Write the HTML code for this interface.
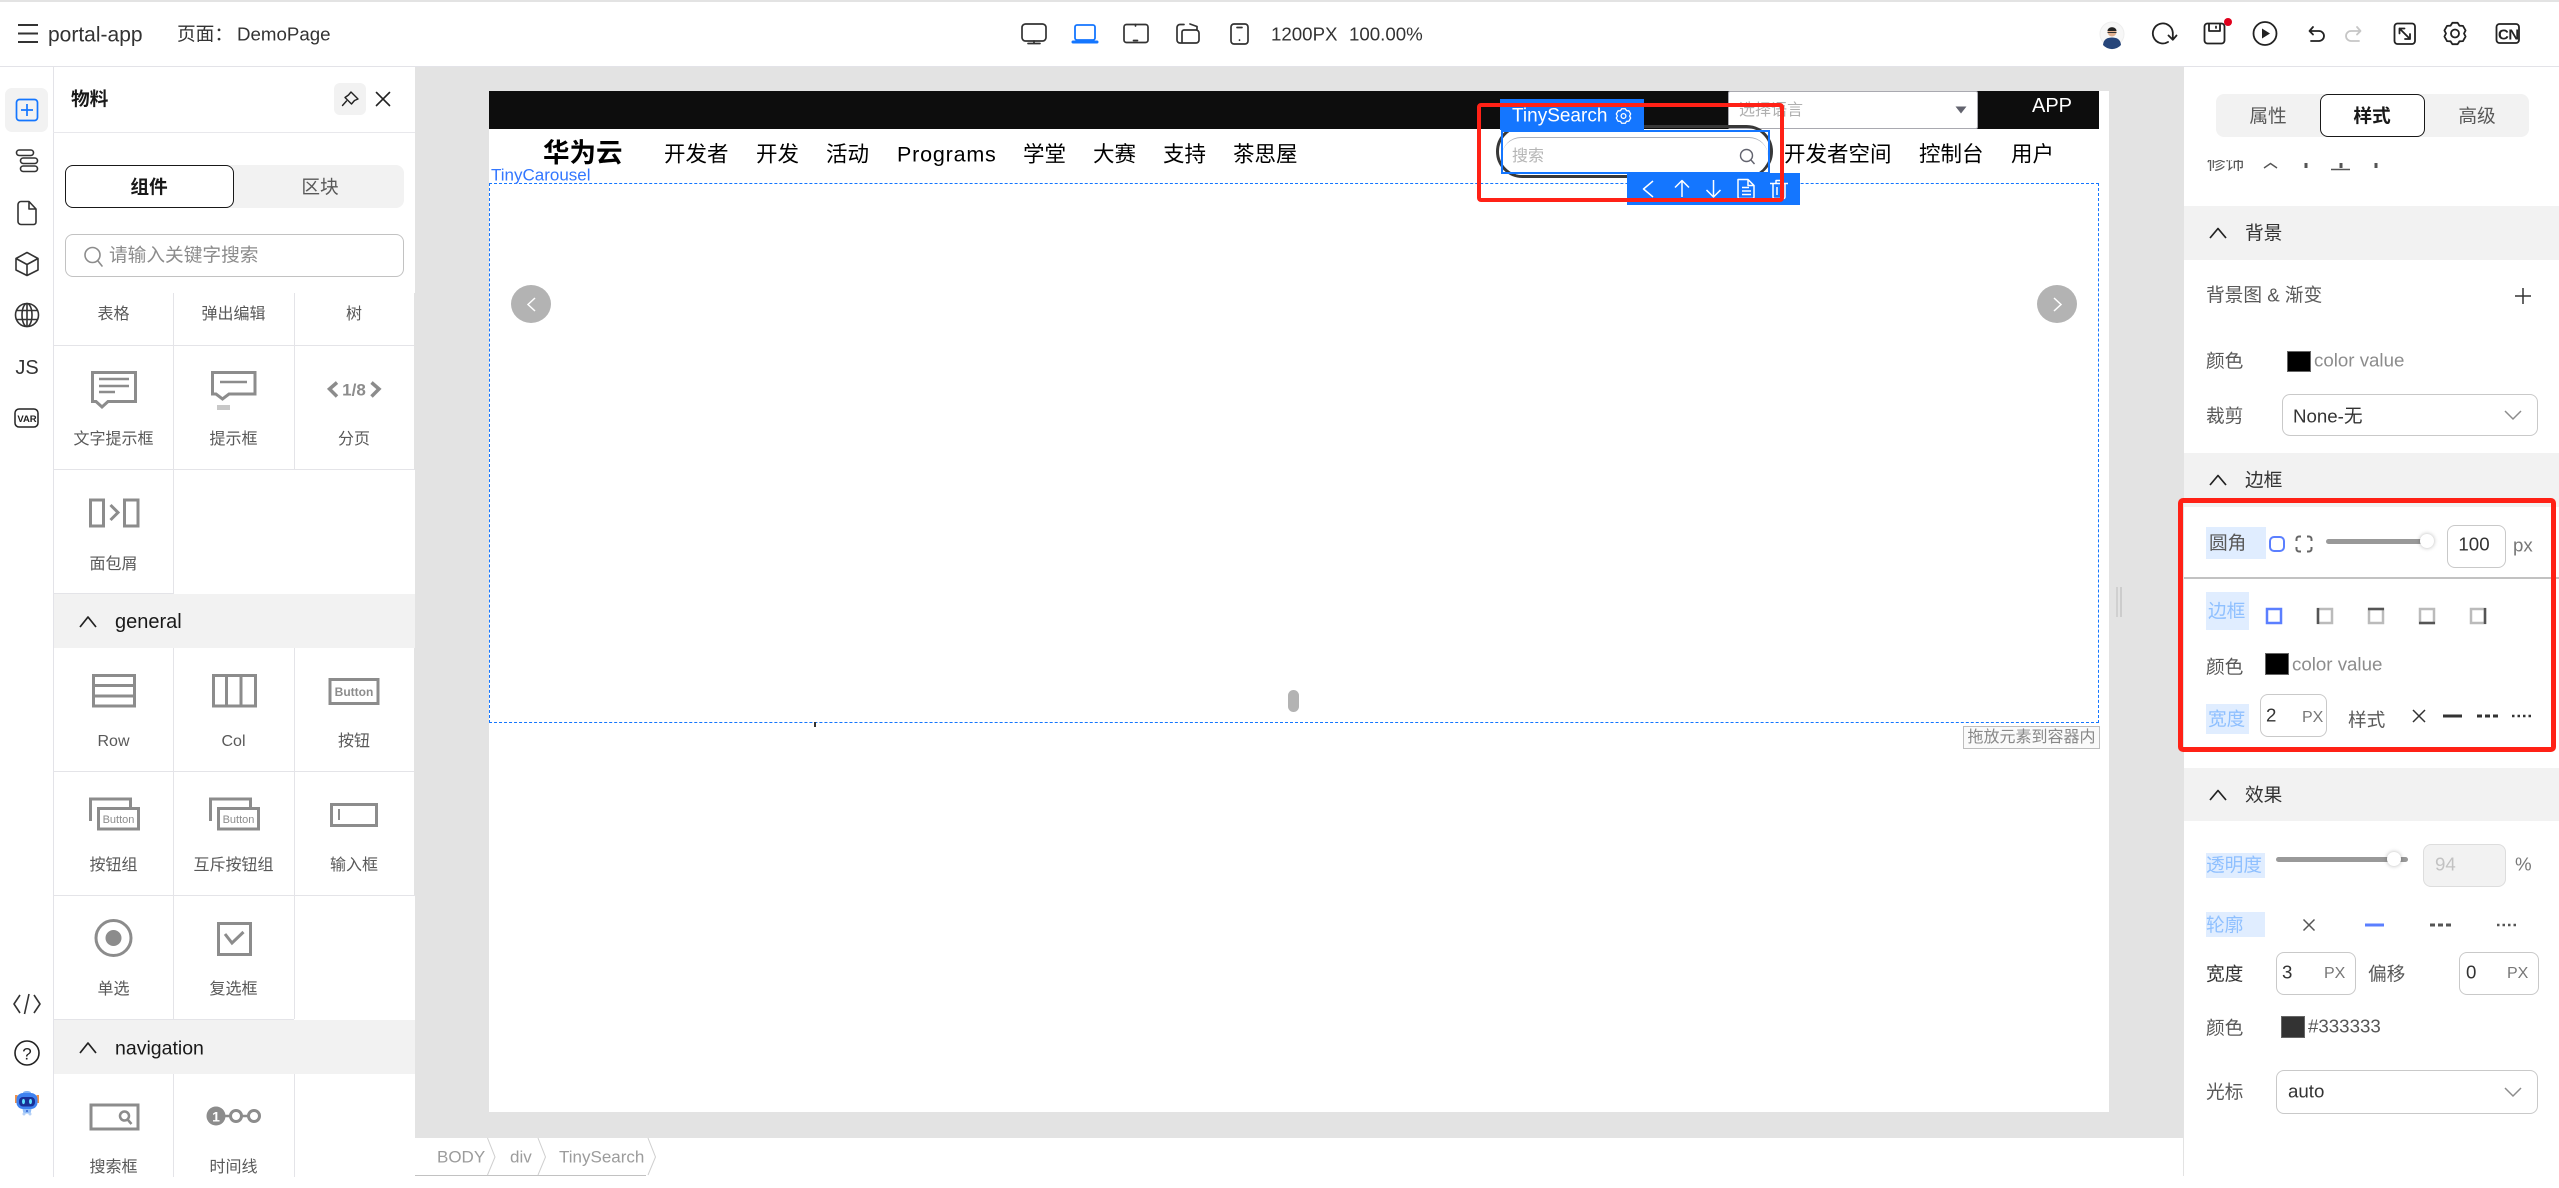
<!DOCTYPE html>
<html lang="zh"><head><meta charset="utf-8"><title>portal-app</title>
<style>
html,body{margin:0;padding:0;background:#fff}
#p{position:relative;width:2559px;height:1188px;overflow:hidden;background:#fff;font-family:"Liberation Sans","Noto Sans CJK SC",sans-serif;color:#333;font-size:18.7px}
.b{position:absolute;box-sizing:border-box}
.t{position:absolute;white-space:nowrap;line-height:1;transform:translateY(calc(-50% + 1px))}
.c{transform:translate(-50%,calc(-50% + 1px))}
.g{font-size:16px;color:#595959;margin-top:1px}
.l{color:#595959}
.hi{color:#8fc0ff}
.nav{font-size:21.5px;color:#000}
.inp{background:#fff;border:1px solid #c9c9c9;border-radius:8px}
.hd{background:#f2f2f2;left:2184px;width:375px}
svg{position:absolute;left:0;top:0}
</style></head><body><div id="p">
<!-- frame -->
<div class="b" style="left:0;top:0;width:2559px;height:2px;background:#e3e3e3"></div>
<div class="b" style="left:0;top:66px;width:2559px;height:1px;background:#e3e3e8"></div>
<div class="b" style="left:415px;top:67px;width:1769px;height:1071px;background:#e3e3e3"></div>
<div class="b" style="left:53px;top:67px;width:1px;height:1110px;background:#e3e3e8"></div>
<div class="b" style="left:5px;top:88px;width:43px;height:44px;background:#f2f2f2;border-radius:7px"></div>
<div class="b" style="left:2183px;top:1138px;width:1px;height:38px;background:#e3e3e3"></div>
<div class="b" style="left:2116px;top:587px;width:2px;height:30px;background:#d0d0d0"></div>
<div class="b" style="left:2120px;top:587px;width:2px;height:30px;background:#cccccc"></div>

<!-- left panel -->
<div class="b" style="left:53px;top:132px;width:362px;height:1px;background:#e8e8ec"></div>
<div class="b" style="left:334px;top:83px;width:32px;height:32px;background:#f2f2f2;border-radius:6px"></div>
<div class="b" style="left:65px;top:165px;width:339px;height:43px;background:#f2f2f2;border-radius:8px"></div>
<div class="b" style="left:65px;top:165px;width:169px;height:43px;background:#fff;border:1px solid #191919;border-radius:8px"></div>
<div class="b" style="left:65px;top:234px;width:339px;height:43px;background:#fff;border:1px solid #c2c2c2;border-radius:8px"></div>

<!-- grid lines -->
<div class="b" style="left:173px;top:293px;width:1px;height:301px;background:#e4e4e8"></div>
<div class="b" style="left:294px;top:293px;width:1px;height:176px;background:#e4e4e8"></div>
<div class="b" style="left:53px;top:345px;width:361px;height:1px;background:#e4e4e8"></div>
<div class="b" style="left:53px;top:469px;width:362px;height:1px;background:#e4e4e8"></div>
<div class="b" style="left:53px;top:593px;width:120px;height:1px;background:#e4e4e8"></div>
<div class="b" style="left:54px;top:594px;width:361px;height:54px;background:#f2f2f2"></div>
<div class="b" style="left:173px;top:648px;width:1px;height:371px;background:#e4e4e8"></div>
<div class="b" style="left:294px;top:648px;width:1px;height:371px;background:#e4e4e8"></div>
<div class="b" style="left:53px;top:771px;width:361px;height:1px;background:#e4e4e8"></div>
<div class="b" style="left:53px;top:895px;width:362px;height:1px;background:#e4e4e8"></div>
<div class="b" style="left:53px;top:1019px;width:241px;height:1px;background:#e4e4e8"></div>
<div class="b" style="left:54px;top:1020px;width:361px;height:54px;background:#f2f2f2"></div>
<div class="b" style="left:173px;top:1074px;width:1px;height:103px;background:#e4e4e8"></div>
<div class="b" style="left:294px;top:1074px;width:1px;height:103px;background:#e4e4e8"></div>
<div class="b" style="left:414px;top:293px;width:1px;height:176px;background:#e3e3e3"></div>
<div class="b" style="left:414px;top:648px;width:1px;height:247px;background:#e3e3e3"></div>

<!-- canvas -->
<div class="b" style="left:489px;top:91px;width:1620px;height:1021px;background:#fff"></div>
<div class="b" style="left:489px;top:91px;width:1610px;height:38px;background:#0d0d0d"></div>
<div class="b" style="left:1728px;top:91px;width:250px;height:38px;background:#fff;border:1px solid #a9a9b0;border-radius:2px"></div>
<div class="b" style="left:489px;top:183px;width:1610px;height:540px;border:1px dashed #1476ff"></div>
<div class="b" style="left:511px;top:285px;width:40px;height:38px;background:#b3b3b3;border-radius:50%"></div>
<div class="b" style="left:2037px;top:285px;width:40px;height:38px;background:#b3b3b3;border-radius:50%"></div>
<div class="b" style="left:1288px;top:690px;width:11px;height:22px;background:#b3b3b3;border-radius:6px"></div>
<div class="b" style="left:814px;top:722px;width:2px;height:5px;background:#333"></div>
<div class="b" style="left:1963px;top:726px;width:137px;height:23px;background:#fafafa;border:1px solid #bdbdbd"></div>

<!-- selected search -->
<div class="b" style="left:1496px;top:125px;width:277px;height:53px;border:3px solid #383838;border-radius:27px"></div>
<div class="b" style="left:1502px;top:137px;width:266px;height:38px;background:#fff;border-top:1px solid #adb0b8;border-radius:19px"></div>
<div class="b" style="left:1501px;top:130px;width:269px;height:44px;border:2px solid #1476ff"></div>
<div class="b" style="left:1500px;top:99px;width:144px;height:31px;background:#1476ff"></div>
<div class="b" style="left:1627px;top:173px;width:173px;height:32px;background:#1476ff"></div>

<!-- right panel -->
<div class="b" style="left:2216px;top:94px;width:313px;height:43px;background:#f2f2f2;border-radius:8px"></div>
<div class="b" style="left:2320px;top:94px;width:105px;height:43px;background:#fff;border:1px solid #191919;border-radius:8px"></div>
<div class="b hd" style="top:206px;height:54px"></div>
<div class="b" style="left:2287px;top:351px;width:24px;height:21px;background:#000;border:1px solid #666"></div>
<div class="b inp" style="left:2282px;top:394px;width:256px;height:42px"></div>
<div class="b hd" style="top:453px;height:54px"></div>
<div class="b" style="left:2206px;top:527px;width:60px;height:32px;background:#e0edff"></div>
<div class="b inp" style="left:2447px;top:525px;width:59px;height:43px"></div>
<div class="b" style="left:2184px;top:577px;width:375px;height:2px;background:#c2c2c2"></div>
<div class="b" style="left:2206px;top:592px;width:43px;height:38px;background:#e0edff"></div>
<div class="b" style="left:2265px;top:653px;width:24px;height:22px;background:#000;border:1px solid #666"></div>
<div class="b" style="left:2206px;top:704px;width:43px;height:30px;background:#e0edff"></div>
<div class="b inp" style="left:2260px;top:694px;width:67px;height:43px"></div>
<div class="b hd" style="top:768px;height:53px"></div>
<div class="b" style="left:2206px;top:853px;width:59px;height:25px;background:#e0edff"></div>
<div class="b" style="left:2423px;top:844px;width:83px;height:43px;background:#f2f2f2;border:1px solid #ddd;border-radius:8px"></div>
<div class="b" style="left:2206px;top:912px;width:59px;height:25px;background:#e0edff"></div>
<div class="b inp" style="left:2276px;top:952px;width:80px;height:43px"></div>
<div class="b inp" style="left:2459px;top:952px;width:80px;height:43px"></div>
<div class="b" style="left:2281px;top:1016px;width:24px;height:22px;background:#333;border:1px solid #666"></div>
<div class="b inp" style="left:2276px;top:1070px;width:262px;height:44px"></div>
<div class="b" style="left:2326px;top:539px;width:104px;height:5px;background:#999;border-radius:3px"></div>
<div class="b" style="left:2420px;top:534px;width:14px;height:14px;background:#fff;border-radius:50%;box-shadow:0 0 4px rgba(0,0,0,.3)"></div>
<div class="b" style="left:2276px;top:857px;width:132px;height:5px;background:#999;border-radius:3px"></div>
<div class="b" style="left:2387px;top:852px;width:14px;height:14px;background:#fff;border-radius:50%;box-shadow:0 0 4px rgba(0,0,0,.3)"></div>

<!-- breadcrumb -->
<div class="b" style="left:415px;top:1175px;width:231px;height:1px;background:#c2c2c2"></div>

<svg width="2559" height="1188" viewBox="0 0 2559 1188" fill="none">
<!-- top bar -->
<g stroke="#333" stroke-width="2"><path d="M18 25H38M18 33.5H38M18 42H38"/></g>
<g stroke="#333" stroke-width="1.7" stroke-linecap="round" stroke-linejoin="round">
<rect x="1022" y="24" width="24" height="17" rx="3.5"/><path d="M1034 41v2.5M1028 43.5h12"/>
<rect x="1124" y="24.5" width="24" height="18" rx="2.5"/><path d="M1135.5 24.5v1.500M1133.5 40.5h4"/>
<path d="M1184 24.5h-4a3 3 0 0 0-3 3V40a3 3 0 0 0 3 3h16a3 3 0 0 0 3-3v-7a3 3 0 0 0-3-3h-12a2 2 0 0 0-2 2v11M1190 24l7 2.500v3.500"/>
<rect x="1231" y="24" width="17" height="20" rx="3"/><path d="M1237 27.5h5M1239.5 40v.3"/>
</g>
<g stroke="#1476ff" stroke-width="1.8" stroke-linejoin="round"><rect x="1075" y="25" width="20" height="15" rx="2"/><path d="M1073 42h24" stroke-width="3" stroke-linecap="round"/></g>
<!-- right top icons -->
<circle cx="2112" cy="34" r="12" fill="#f7f7f7" stroke="#eee"/>
<path d="M2103 45c.5-6 4.500-7.500 9-7.500s8.500 1.500 9 7.500a12 12 0 0 1-18 0z" fill="#26457a"/>
<circle cx="2112" cy="32" r="4.500" fill="#e0b090"/><path d="M2107.500 31c0-5 9-5 9 0z" fill="#222"/><path d="M2107.500 32.500h9" stroke="#333"/>
<g stroke="#222" stroke-width="1.8" stroke-linecap="round" stroke-linejoin="round">
<path d="M2168 42a10 10 0 1 1 4.800-9.500V39.500M2168.500 35.500l4.300 4.300 3.700-4.300"/>
<rect x="2204.500" y="23.500" width="20" height="20" rx="3"/><path d="M2209 24v7h11v-7M2216 26.500v1.500"/>
<circle cx="2265" cy="33.500" r="11.500"/>
<path d="M2313 27l-3.500 4 3.500 3.500M2310 31h9a5 5 0 0 1 0 10h-8"/>
<rect x="2394.500" y="23.500" width="20.500" height="20.500" rx="3"/><path d="M2399.500 28.500l10.500 10.500M2399.500 33.500v-5h5M2410 34v5h-5"/>
<rect x="2496.500" y="24" width="22.500" height="19" rx="3"/>
<polygon transform="translate(2455 33.500)" points="2.660,10.670 -2.660,10.670 -4.500,7.790 -7.910,7.640 -10.570,3.030 -9,0 -10.570,-3.030 -7.910,-7.640 -4.500,-7.790 -2.660,-10.670 2.660,-10.670 4.500,-7.790 7.910,-7.640 10.570,-3.030 9,0 10.570,3.030 7.910,7.640 4.500,7.790"/>
<circle cx="2455" cy="33.500" r="4"/>
</g>
<path d="M2262 28.500v10l8-5z" fill="#222"/>
<circle cx="2228" cy="22" r="4" fill="#e0001c"/>
<path d="M2357 27l3.500 4-3.500 3.500M2360 31h-9a5 5 0 0 0 0 10h8" stroke="#c6c6c6" stroke-width="1.800" stroke-linecap="round" stroke-linejoin="round"/>

<!-- sidebar icons -->
<rect x="16.500" y="99.500" width="21" height="21" rx="3" stroke="#1476ff" stroke-width="1.700"/>
<path d="M21 110h12M27 104v12" stroke="#1476ff" stroke-width="1.700"/>
<g stroke="#333" stroke-width="1.600" stroke-linejoin="round">
<rect x="16.500" y="150" width="17" height="5.500" rx="2.700"/><rect x="20.500" y="158" width="17" height="5.500" rx="2.700"/><rect x="20.500" y="166" width="17" height="5.500" rx="2.700"/>
<path d="M21 201.500h8l7 7.500v13a2.500 2.500 0 0 1-2.500 2.500H21a3 3 0 0 1-3-3v-17a3 3 0 0 1 3-3zM29 201.500v7.500h7"/>
<path d="M27 252.500l11 6v11.500l-11 5.500-11-5.500v-11.500zM16 258.500l11 6 11-6M27 264.500v11"/>
<circle cx="27" cy="315" r="11.500"/><ellipse cx="27" cy="315" rx="5" ry="11.500"/><path d="M16.500 310.500h21M16.500 319.500h21M27 303.500v23"/>
<rect x="15" y="409" width="23" height="18" rx="4" stroke="#222" stroke-width="1.500"/>
<path d="M20 995l-6 9 6 9M29 994l-4.500 20M34 995l6 9-6 9"/>
<circle cx="27" cy="1053" r="12" stroke="#222"/>
</g>
<text x="27" y="422" font-size="9.500" font-weight="700" text-anchor="middle" fill="#222">VAR</text>
<text x="27" y="1059.500" font-size="17" text-anchor="middle" fill="#222">?</text>
<!-- robot -->
<path d="M15 1095h2.500v8H15zM36.500 1095h2.500v8h-2.500z" fill="#f0924a"/>
<ellipse cx="27" cy="1092.500" rx="4" ry="1.500" fill="#7fb0f5"/>
<rect x="16.500" y="1093" width="21" height="16" rx="6.500" fill="#3f82f0"/>
<rect x="19" y="1097" width="16" height="9.500" rx="4" fill="#1a2f96"/>
<ellipse cx="23.500" cy="1101.500" rx="1.500" ry="2.600" fill="#5fe0ff"/><ellipse cx="30.500" cy="1101.500" rx="1.500" ry="2.600" fill="#5fe0ff"/>
<path d="M22.500 1109h9l-1 4.500h-7z" fill="#8fbcf7"/><circle cx="24" cy="1114" r="1.500" fill="#b4d0f7"/><circle cx="30" cy="1114" r="1.500" fill="#b4d0f7"/><circle cx="27" cy="1111" r="1" fill="#2f5fd0"/>

<!-- left panel head icons -->
<g stroke="#222" stroke-width="1.400" stroke-linejoin="round" stroke-linecap="round">
<path d="M351 92l7 7-3.500 1.500-3 3.500-6.500-6.500 3.500-2.500zM346.500 101l-4 4.500"/>
<path d="M376.500 92.500l13 13M389.500 92.500l-13 13" stroke-width="1.600"/>
<circle cx="92.500" cy="255" r="7.500" stroke="#8c8c8c" stroke-width="1.600"/><path d="M98 261l4 5" stroke="#8c8c8c" stroke-width="1.600"/>
<path d="M80 627l8-10 8 10M80 1053l8-10 8 10" stroke-width="1.700" stroke-linecap="butt"/>
<path d="M2210 238l8-9.500 8 9.500M2210 485l8-9.500 8 9.500M2210 800l8-9.500 8 9.500" stroke-width="1.700" stroke-linecap="butt"/>
</g>

<!-- component icons -->
<g stroke="#8c8c8c" stroke-width="3" stroke-linejoin="miter">
<path d="M92.500 372.500h43v29H108l-6 5.500-6-5.500h-3.500z"/>
<path d="M99 379h30M99 386h30M99 392h16" stroke-width="2.500"/>
<path d="M212.500 372.500H255V394h-26l-6.500 5-6.500-5h-3.500z"/><path d="M220 382h27" stroke-width="2.500"/>
<path d="M337 382.500l-7.500 6.500 7.500 7.500M371.500 382.500l7.500 6.500-7.500 7.500" stroke-width="3.500"/>
<rect x="90.500" y="500" width="13" height="26"/><rect x="124.500" y="500" width="13.500" height="26"/><path d="M110.500 505l7.500 7.500-7.500 7.500"/>
<rect x="93.500" y="675.500" width="41" height="30.500"/><path d="M93.500 685.500h41M93.500 696h41"/>
<rect x="213.500" y="675.500" width="42" height="30.500"/><path d="M226.500 675.500v30.500M241 675.500v30.500"/>
<rect x="330" y="679.500" width="48" height="24"/>
<path d="M90.500 821v-22h40v8"/><rect x="98.500" y="808.500" width="40" height="20.500"/>
<path d="M210.500 821v-22h40v8"/><rect x="218.500" y="808.500" width="40" height="20.500"/>
<rect x="331.500" y="804.500" width="45" height="21"/><path d="M339 809v11" stroke-width="2"/>
<circle cx="113.500" cy="938" r="17.500"/><rect x="218.500" y="923.500" width="32" height="31"/><path d="M225 934l7 9 11.500-11"/>
<rect x="91" y="1105" width="47" height="24"/><circle cx="124.500" cy="1116" r="4.500" stroke-width="2.500"/><path d="M128 1120l3.500 4" stroke-width="2.500"/>
<path d="M225 1116h5M242 1116h6" stroke-width="2.500"/><circle cx="236" cy="1116" r="5.500"/><circle cx="254" cy="1116" r="5.500"/>
</g>
<circle cx="113.500" cy="938" r="8" fill="#8c8c8c"/>
<circle cx="216" cy="1116" r="9.500" fill="#8c8c8c"/>
<rect x="217" y="405" width="13" height="5" fill="#c8c8c8"/>
<text x="354" y="395.500" font-size="17" font-weight="700" text-anchor="middle" fill="#8c8c8c">1/8</text>
<text x="354" y="696" font-size="12" font-weight="700" text-anchor="middle" fill="#8c8c8c">Button</text>
<text x="118.500" y="823" font-size="11" text-anchor="middle" fill="#8c8c8c">Button</text>
<text x="238.500" y="823" font-size="11" text-anchor="middle" fill="#8c8c8c">Button</text>
<text x="216" y="1121.500" font-size="14" font-weight="700" text-anchor="middle" fill="#fff">1</text>

<!-- carousel arrows -->
<path d="M535 298l-7 6.500 7 6.500M2054 298l7 6.500-7 6.500" stroke="#fff" stroke-width="1.500"/>
<!-- select caret -->
<path d="M1955.500 106.500h11l-5.500 7z" fill="#62636e"/>
<!-- search magnifier -->
<circle cx="1746.500" cy="155.500" r="6" stroke="#62636e" stroke-width="1.400"/><path d="M1751 160l3.500 4" stroke="#62636e" stroke-width="1.400"/>
<!-- tiny gear -->
<g transform="translate(1623.500 116) scale(.68)" stroke="#fff" stroke-width="1.900" stroke-linejoin="round"><polygon points="2.660,10.670 -2.660,10.670 -4.500,7.790 -7.910,7.640 -10.570,3.030 -9,0 -10.570,-3.030 -7.910,-7.640 -4.500,-7.790 -2.660,-10.670 2.660,-10.670 4.500,-7.790 7.910,-7.640 10.570,-3.030 9,0 10.570,3.030 7.910,7.640 4.500,7.790"/><circle r="3.500"/></g>
<!-- toolbar icons -->
<g stroke="#fff" stroke-width="1.500" stroke-linejoin="round">
<path d="M1653 181l-9.500 8 9.500 8M1682 197v-16M1675 187.500l7-7 7 7M1713.500 180v16M1706.500 190l7 7 7-7"/>
<path d="M1738 179.500h10l6 6v11.500a1.500 1.500 0 0 1-1.500 1.500H1739.500a1.500 1.500 0 0 1-1.500-1.500zM1748 179.500v6h6M1742 187.500h7M1742 191h9M1742 194.500h9"/>
<path d="M1770 183.500h18M1773 183.500v13.500a1.500 1.500 0 0 0 1.500 1.500h9a1.500 1.500 0 0 0 1.500-1.500V183.500M1776 180.500h6v3h-6zM1777 187v8M1781 187v8"/>
</g>

<!-- right panel clipped row -->
<path d="M2264 168l6.500-4.500 6.500 4.500" stroke="#555" stroke-width="1.400"/>
<path d="M2306 163v5M2341 163v5M2376 163v5" stroke="#555" stroke-width="3"/>
<path d="M2331 169.500h19" stroke="#555" stroke-width="1.400"/>
<path d="M2515 296h16M2523 288v16" stroke="#333" stroke-width="1.500"/>
<g stroke="#8c8c8c" stroke-width="1.500"><path d="M2505 411l8 8 8-8M2505 1088l8 8 8-8"/></g>

<!-- radius icons -->
<rect x="2270" y="537" width="14" height="14" rx="4" stroke="#5b7fff" stroke-width="2"/>
<path d="M2296.500 541v-2a2.500 2.500 0 0 1 2.500-2.500h2M2307 536.500h2a2.500 2.500 0 0 1 2.500 2.500v2M2311.500 547v2a2.500 2.500 0 0 1-2.500 2.500h-2M2301 551.500h-2a2.500 2.500 0 0 1-2.500-2.500v-2" stroke="#666" stroke-width="2"/>
<!-- border icons -->
<rect x="2267" y="609" width="14" height="14" stroke="#5b7fff" stroke-width="2.500"/>
<g stroke="#bbb" stroke-width="2.500">
<rect x="2318" y="609" width="14" height="14"/><rect x="2369" y="609" width="14" height="14"/><rect x="2420" y="609" width="14" height="14"/><rect x="2471" y="609" width="14" height="14"/></g>
<g stroke="#555" stroke-width="2.500"><path d="M2318 608v16M2368 609h16M2419 623h16M2485 608v16"/></g>
<!-- line style icons -->
<g stroke="#333"><path d="M2413 710l12 12M2425 710l-12 12" stroke-width="1.500"/>
<path d="M2443 716h19" stroke-width="3"/>
<path d="M2477 716h21" stroke-width="3" stroke-dasharray="5 3"/>
<path d="M2512 716h20" stroke-width="2.500" stroke-dasharray="2.500 3"/></g>
<g stroke="#555"><path d="M2303.500 919.500l11 11M2314.500 919.500l-11 11" stroke-width="1.500"/>
<path d="M2430 925h21" stroke-width="3" stroke-dasharray="5 3"/>
<path d="M2497 925h20" stroke-width="2.500" stroke-dasharray="2.500 3"/></g>
<path d="M2365 925h19" stroke="#5b7fff" stroke-width="3"/>
<!-- breadcrumb chevrons -->
<g stroke="#cfcfcf"><path d="M487.500 1138l7.500 19-7.500 18M538 1138l7.500 19-7.500 18M648 1138l7.500 19-7.500 18"/></g>
</svg>

<!-- TEXT -->
<div class="t" style="left:48px;top:34px;font-size:21px">portal-app</div>
<div class="t" style="left:177px;top:34px">页面：</div>
<div class="t" style="left:237px;top:34px">DemoPage</div>
<div class="t" style="left:1271px;top:34px">1200PX</div>
<div class="t" style="left:1349px;top:34px">100.00%</div>
<div class="t" style="left:2498px;top:34px;font-size:15px;font-weight:700;letter-spacing:-.5px;color:#222">CN</div>
<div class="t c" style="left:27px;top:367px;font-size:20px">JS</div>

<div class="t" style="left:71px;top:99px;font-weight:700;color:#191919">物料</div>
<div class="t c" style="left:149px;top:187px;font-weight:700;color:#191919">组件</div>
<div class="t c" style="left:320px;top:187px;color:#595959">区块</div>
<div class="t" style="left:109px;top:255px;color:#8c8c8c">请输入关键字搜索</div>

<div class="t c g" style="left:113.500px;top:313px">表格</div>
<div class="t c g" style="left:233.500px;top:313px">弹出编辑</div>
<div class="t c g" style="left:354px;top:313px">树</div>
<div class="t c g" style="left:113.500px;top:438px">文字提示框</div>
<div class="t c g" style="left:233.500px;top:438px">提示框</div>
<div class="t c g" style="left:354px;top:438px">分页</div>
<div class="t c g" style="left:113.500px;top:563px">面包屑</div>
<div class="t" style="left:115px;top:621px;font-size:20px;color:#191919">general</div>
<div class="t c g" style="left:113.500px;top:740px">Row</div>
<div class="t c g" style="left:233.500px;top:740px">Col</div>
<div class="t c g" style="left:354px;top:740px">按钮</div>
<div class="t c g" style="left:113.500px;top:864px">按钮组</div>
<div class="t c g" style="left:233.500px;top:864px">互斥按钮组</div>
<div class="t c g" style="left:354px;top:864px">输入框</div>
<div class="t c g" style="left:113.500px;top:988px">单选</div>
<div class="t c g" style="left:233.500px;top:988px">复选框</div>
<div class="t" style="left:115px;top:1048px;font-size:19.500px;color:#191919">navigation</div>
<div class="t c g" style="left:113.500px;top:1166px">搜索框</div>
<div class="t c g" style="left:233.500px;top:1166px">时间线</div>

<div class="t" style="left:543px;top:152px;font-size:26.500px;font-weight:700;color:#000">华为云</div>
<div class="t nav" style="left:664px;top:154px">开发者</div>
<div class="t nav" style="left:756px;top:154px">开发</div>
<div class="t nav" style="left:826px;top:154px">活动</div>
<div class="t nav" style="left:897px;top:154px;letter-spacing:.8px">Programs</div>
<div class="t nav" style="left:1023px;top:154px">学堂</div>
<div class="t nav" style="left:1093px;top:154px">大赛</div>
<div class="t nav" style="left:1163px;top:154px">支持</div>
<div class="t nav" style="left:1233px;top:154px">茶思屋</div>
<div class="t nav" style="left:1784px;top:154px">开发者空间</div>
<div class="t nav" style="left:1919px;top:154px">控制台</div>
<div class="t nav" style="left:2011px;top:154px">用户</div>
<div class="t" style="left:491px;top:174px;font-size:17px;color:#3377ff">TinyCarousel</div>
<div class="t" style="left:1739px;top:110px;font-size:16px;color:#b0b0b0">选择语言</div>
<div class="t" style="left:2032px;top:105px;font-size:20px;color:#fff">APP</div>
<div class="t" style="left:1512px;top:115px;font-size:19px;color:#fff">TinySearch</div>
<div class="t" style="left:1512px;top:156px;font-size:16px;color:#b5b5b5">搜索</div>
<div class="t c" style="left:2031.500px;top:737px;font-size:16px;color:#888">拖放元素到容器内</div>

<div class="t" style="left:437px;top:1156px;font-size:17px;color:#9c9c9c">BODY</div>
<div class="t" style="left:510px;top:1156px;font-size:17px;color:#9c9c9c">div</div>
<div class="t" style="left:559px;top:1156px;font-size:17px;color:#9c9c9c">TinySearch</div>

<div class="t c l" style="left:2268px;top:116px">属性</div>
<div class="t c" style="left:2372px;top:116px;font-weight:700;color:#191919">样式</div>
<div class="t c l" style="left:2477px;top:116px">高级</div>
<div class="b" style="left:2200px;top:160px;width:60px;height:13px;overflow:hidden"><div class="t l" style="left:7px;top:3px">修饰</div></div>

<div class="t" style="left:2245px;top:233px;color:#333">背景</div>
<div class="t l" style="left:2206px;top:295px">背景图 &amp; 渐变</div>
<div class="t l" style="left:2206px;top:361px">颜色</div>
<div class="t" style="left:2314px;top:360px;color:#8c8c8c">color value</div>
<div class="t l" style="left:2206px;top:416px">裁剪</div>
<div class="t" style="left:2293px;top:416px;color:#333">None-无</div>
<div class="t" style="left:2245px;top:480px;color:#333">边框</div>
<div class="t l" style="left:2209px;top:543px">圆角</div>
<div class="t c" style="left:2474px;top:544px;color:#333">100</div>
<div class="t" style="left:2513px;top:545px;color:#777">px</div>
<div class="t hi" style="left:2208px;top:611px">边框</div>
<div class="t l" style="left:2206px;top:667px">颜色</div>
<div class="t" style="left:2292px;top:664px;color:#8c8c8c">color value</div>
<div class="t hi" style="left:2208px;top:719px">宽度</div>
<div class="t" style="left:2266px;top:715px;color:#333">2</div>
<div class="t" style="left:2302px;top:717px;font-size:16px;color:#777">PX</div>
<div class="t l" style="left:2348px;top:720px">样式</div>
<div class="t" style="left:2245px;top:795px;color:#333">效果</div>
<div class="t hi" style="left:2206px;top:865px">透明度</div>
<div class="t" style="left:2435px;top:864px;color:#c2c2c2">94</div>
<div class="t" style="left:2515px;top:864px;color:#777">%</div>
<div class="t hi" style="left:2206px;top:925px">轮廓</div>
<div class="t" style="left:2206px;top:974px;color:#333">宽度</div>
<div class="t" style="left:2282px;top:972px;color:#333">3</div>
<div class="t" style="left:2324px;top:973px;font-size:16px;color:#777">PX</div>
<div class="t l" style="left:2368px;top:974px">偏移</div>
<div class="t" style="left:2466px;top:972px;color:#333">0</div>
<div class="t" style="left:2507px;top:973px;font-size:16px;color:#777">PX</div>
<div class="t l" style="left:2206px;top:1028px">颜色</div>
<div class="t" style="left:2308px;top:1026px;color:#555">#333333</div>
<div class="t l" style="left:2206px;top:1092px">光标</div>
<div class="t" style="left:2288px;top:1091px;color:#333">auto</div>

<!-- red annotations -->
<div class="b" style="left:1477px;top:103px;width:307px;height:99px;border:4px solid #ff2116;border-radius:4px"></div>
<div class="b" style="left:2178px;top:498px;width:378px;height:254px;border:5px solid #ff2116;border-radius:5px"></div>
</div></body></html>
